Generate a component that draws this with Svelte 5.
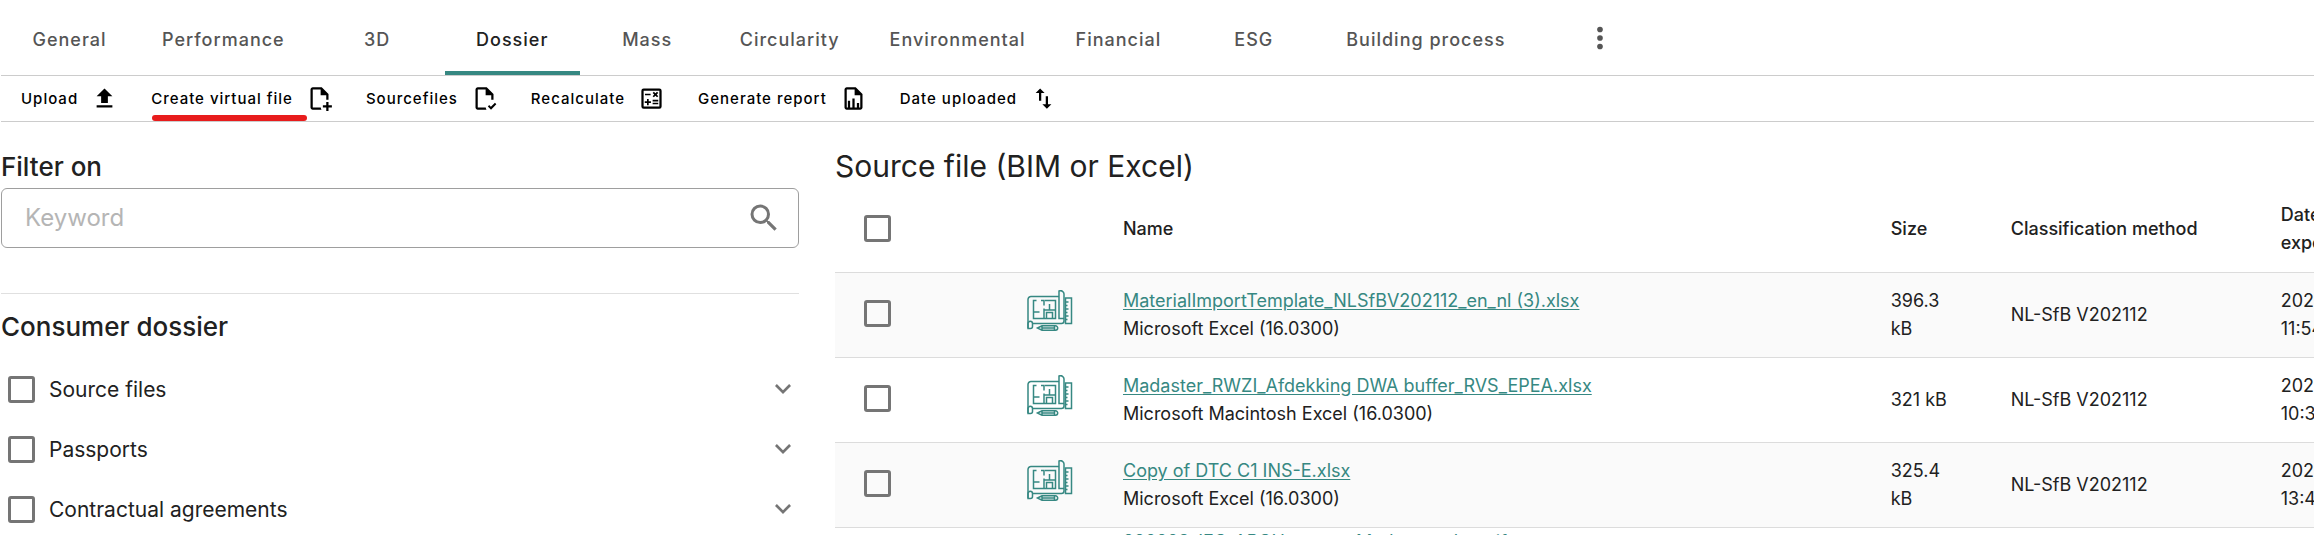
<script lang="ts">
	const tabs = [
		'General',
		'Performance',
		'3D',
		'Dossier',
		'Mass',
		'Circularity',
		'Environmental',
		'Financial',
		'ESG',
		'Building process'
	];

	const actions = [
		{ label: 'Upload', icon: 'upload' },
		{ label: 'Create virtual file', icon: 'file-plus', marked: true },
		{ label: 'Sourcefiles', icon: 'file-check' },
		{ label: 'Recalculate', icon: 'calculator' },
		{ label: 'Generate report', icon: 'file-chart' },
		{ label: 'Date uploaded', icon: 'sort' }
	];

	const icons: Record<string, string> = {
		upload: 'M9 16v-6H5l7-7 7 7h-4v6H9zm-4 4v-2h14v2H5z',
		'file-plus':
			'M6 2c-1.1 0-2 .9-2 2v16c0 1.1.9 2 2 2h7.8a6 6 0 0 1-.7-2H6V4h7v5h5v4.1c.3-.1.7-.1 1-.1s.7 0 1 .1V8l-6-6H6zm12 13v3h-3v2h3v3h2v-3h3v-2h-3v-3h-2z',
		'file-check':
			'M6 2c-1.1 0-2 .9-2 2v16c0 1.1.9 2 2 2h7.8a6 6 0 0 1-.7-2H6V4h7v5h5v4.1c.3-.1.7-.1 1-.1s.7 0 1 .1V8l-6-6H6zm15.3 13.8-3.6 3.6-1.6-1.6L15 19l2.8 3 4.7-4.8-1.2-1.4z',
		calculator:
			'M19 3H5a2 2 0 0 0-2 2v14a2 2 0 0 0 2 2h14a2 2 0 0 0 2-2V5a2 2 0 0 0-2-2zm0 16H5V5h14v14zM6.2 7.7h5v1.5h-5zM13 15.7h5v1.5h-5zM13 13.2h5v1.5h-5zM8 18h1.5v-2h2v-1.5h-2v-2H8v2H6V16h2zM14.1 10.9l1.4-1.4 1.4 1.4 1.1-1-1.4-1.4L18 7.1 16.9 6l-1.4 1.4L14.1 6 13 7.1l1.4 1.4L13 9.9z',
		'file-chart':
			'M6 2c-1.1 0-2 .9-2 2v16c0 1.1.9 2 2 2h12c1.1 0 2-.9 2-2V8l-6-6H6zm0 2h7v5h5v11H6V4zm1 10v6h2v-6H7zm4-2v8h2v-8h-2zm4 4v4h2v-4h-2z',
		sort: 'M9 3 5 7h3v7h2V7h3L9 3zm7 14v-7h-2v7h-3l4 4 4-4h-3z'
	};

	const filters = ['Source files', 'Passports', 'Contractual agreements'];

	const files = [
		{
			name: 'MaterialImportTemplate_NLSfBV202112_en_nl (3).xlsx',
			source: 'Microsoft Excel (16.0300)',
			size: '396.3 kB',
			method: 'NL-SfB V202112',
			exported: '2023-11-09 11:54'
		},
		{
			name: 'Madaster_RWZI_Afdekking DWA buffer_RVS_EPEA.xlsx',
			source: 'Microsoft Macintosh Excel (16.0300)',
			size: '321 kB',
			method: 'NL-SfB V202112',
			exported: '2023-10-12 10:38'
		},
		{
			name: 'Copy of DTC C1 INS-E.xlsx',
			source: 'Microsoft Excel (16.0300)',
			size: '325.4 kB',
			method: 'NL-SfB V202112',
			exported: '2023-09-26 13:41'
		},
		{
			name: '220228_IFC_ARCH_extern_Madaster_sloop.ifc',
			source:
				'Autodesk Revit 2022 (NLD) - The EXPRESS Data Manager Version 5.02.0100.07 : 28 Aug 2013 - 22.0.2.392',
			size: '18.2 MB',
			method: 'NL-SfB V202112',
			exported: '2023-09-14 09:20'
		}
	];

	let activeTab = $state('Dossier');
	let keyword = $state('');
	let selected = $state(files.map(() => false));
	let allSelected = $derived(selected.every(Boolean));

	function toggleAll(event: Event) {
		const checked = (event.currentTarget as HTMLInputElement).checked;
		selected = files.map(() => checked);
	}
</script>

<div class="page">
	<nav class="tabs" aria-label="Building">
		{#each tabs as tab}
			<button
				type="button"
				class="tab"
				class:active={tab === activeTab}
				aria-current={tab === activeTab ? 'page' : undefined}
				onclick={() => (activeTab = tab)}
			>
				{tab}
			</button>
		{/each}
		<button type="button" class="more" aria-label="More">
			<svg viewBox="0 0 24 24" aria-hidden="true">
				<circle cx="12" cy="6" r="2" />
				<circle cx="12" cy="12" r="2" />
				<circle cx="12" cy="18" r="2" />
			</svg>
		</button>
	</nav>

	<div class="toolbar">
		{#each actions as action}
			<button type="button" class="action" class:marked={action.marked}>
				{action.label}
				<svg viewBox="0 0 24 24" aria-hidden="true"><path d={icons[action.icon]} /></svg>
			</button>
		{/each}
	</div>

	<div class="content">
		<aside>
			<h2><label for="keyword">Filter on</label></h2>
			<div class="search">
				<input id="keyword" type="text" placeholder="Keyword" bind:value={keyword} />
				<svg viewBox="0 0 24 24" aria-hidden="true">
					<path
						d="M15.5 14h-.79l-.28-.27A6.47 6.47 0 0 0 16 9.5 6.5 6.5 0 1 0 9.5 16c1.61 0 3.09-.59 4.23-1.57l.27.28v.79l5 4.99L20.49 19l-4.99-5zm-6 0a4.5 4.5 0 1 1 0-9 4.5 4.5 0 0 1 0 9z"
					/>
				</svg>
			</div>

			<h2 class="group-title">Consumer dossier</h2>
			<ul class="filters">
				{#each filters as filter}
					<li>
						<label><input type="checkbox" />{filter}</label>
						<button type="button" aria-label={`Expand ${filter}`}>
							<svg viewBox="0 0 24 24" aria-hidden="true">
								<path d="M7.4 8.3 12 12.9l4.6-4.6L18 9.7l-6 6-6-6z" />
							</svg>
						</button>
					</li>
				{/each}
			</ul>
		</aside>

		<main>
			<h1>Source file (BIM or Excel)</h1>
			<table>
				<colgroup>
					<col class="col-check" />
					<col class="col-icon" />
					<col />
					<col class="col-size" />
					<col class="col-method" />
					<col class="col-date" />
				</colgroup>
				<thead>
					<tr>
						<th class="check">
							<input
								type="checkbox"
								aria-label="Select all"
								checked={allSelected}
								onchange={toggleAll}
							/>
						</th>
						<th></th>
						<th>Name</th>
						<th>Size</th>
						<th>Classification method</th>
						<th class="date">Date exported</th>
					</tr>
				</thead>
				<tbody>
					{#each files as file, index}
						<tr>
							<td class="check">
								<input
									type="checkbox"
									aria-label={`Select ${file.name}`}
									bind:checked={selected[index]}
								/>
							</td>
							<td>
								<svg class="plan" viewBox="0 0 46 42" aria-hidden="true">
									<path d="M32 6.5H4a3 3 0 0 0-3 3V38" />
									<path d="M5.5 33.5h29A2.5 2.5 0 0 0 37 31V4.5A3.5 3.5 0 0 0 32 1v27.5h5" />
									<path d="M1 38.5h2.5a2 2 0 0 0 2-2v-3a2 2 0 0 0-4.5 0z" />
									<path
										d="M9.5 10.5h-3v18h22v-18H18M14 10.5h3v5M6.5 22h6M17 18.5v10M22.5 14v6M17 20h11M19.5 28.5v-6h6v6"
									/>
									<path
										d="M38.5 8h6v25.5h-6zM38.5 12h3M38.5 15.5h2M38.5 19h3M38.5 22.5h2M38.5 26h3M38.5 29.5h2"
									/>
									<path
										d="m10.5 38 4.5-2.2h13.5a2.2 2.2 0 0 1 0 4.4H15zM15 38h12M15 35.8v4.4M27.5 35.8v4.4"
									/>
								</svg>
							</td>
							<td>
								<a href="#file">{file.name}</a>
								<div>{file.source}</div>
							</td>
							<td class="size">{file.size}</td>
							<td>{file.method}</td>
							<td class="date">{file.exported}</td>
						</tr>
					{/each}
				</tbody>
			</table>
		</main>
	</div>
</div>

<style>
	:global(body) {
		background: #fff;
		color: #212121;
		font-family: Inter, 'Liberation Sans', sans-serif;
	}

	.page {
		height: 100vh;
		overflow: hidden;
		padding-left: 1px;
	}

	button {
		align-items: center;
		background: none;
		border: 0;
		color: inherit;
		cursor: pointer;
		display: inline-flex;
		font-family: inherit;
		padding: 0;
	}

	svg {
		fill: currentColor;
		flex: none;
	}

	.tabs {
		border-bottom: 1px solid #ccc;
		display: flex;
		height: 75px;
		padding-left: 1px;
	}

	.tab {
		border-bottom: 4px solid transparent;
		color: #555;
		font-size: 18px;
		font-weight: 500;
		justify-content: center;
		letter-spacing: 1px;
		min-width: 135px;
		padding: 8px 25px 0;
		white-space: nowrap;
	}

	.tab.active {
		border-color: #368882;
		color: #212121;
	}

	.more {
		color: #555;
		margin-left: 53px;
	}

	.more svg {
		height: 34px;
		width: 34px;
	}

	.toolbar {
		border-bottom: 1px solid #ccc;
		display: flex;
		height: 45px;
	}

	.action {
		color: #000;
		font-size: 15px;
		font-weight: 500;
		gap: 13px;
		letter-spacing: 1px;
		padding: 0 13px 0 20px;
		position: relative;
		white-space: nowrap;
	}

	.action svg {
		height: 27px;
		width: 27px;
	}

	.action.marked::after {
		background: #e81c1c;
		border-radius: 3px;
		bottom: 0;
		content: '';
		height: 6px;
		left: 21px;
		position: absolute;
		right: 39px;
	}

	.content {
		display: grid;
		gap: 36px;
		grid-template-columns: 34.5% minmax(0, 1fr);
		padding-top: 24px;
	}

	h1,
	h2 {
		margin: 0;
	}

	h2 {
		font-size: 26px;
		font-weight: 500;
		line-height: 42px;
	}

	.search {
		align-items: center;
		border: 1px solid #9e9e9e;
		border-radius: 6px;
		color: #757575;
		display: flex;
		height: 58px;
		padding: 0 16px 0 23px;
	}

	.search input {
		border: 0;
		color: #212121;
		flex: 1;
		font-family: inherit;
		font-size: 24px;
		min-width: 0;
		outline: none;
		padding: 0 0 2px;
	}

	.search input::placeholder {
		color: #b5b5b5;
	}

	.search svg {
		height: 36px;
		width: 36px;
	}

	.group-title {
		border-top: 1px solid #e0e0e0;
		margin-top: 45px;
		padding-top: 12px;
	}

	.filters {
		list-style: none;
		margin: 11px 0 0;
		padding: 0;
	}

	.filters li {
		align-items: center;
		display: flex;
		height: 60px;
		justify-content: space-between;
	}

	.filters label {
		align-items: center;
		display: flex;
		font-size: 21px;
		gap: 14px;
		padding-left: 7px;
	}

	.filters button {
		color: #757575;
	}

	.filters button svg {
		height: 32px;
		width: 32px;
	}

	input[type='checkbox'] {
		appearance: none;
		border: 3px solid #757575;
		border-radius: 3px;
		display: block;
		height: 27px;
		margin: 0;
		width: 27px;
	}

	input[type='checkbox']:checked {
		background: #368882;
		border-color: #368882;
	}

	h1 {
		font-size: 30px;
		font-weight: 400;
		line-height: 41px;
	}

	table {
		border-collapse: collapse;
		font-size: 18px;
		line-height: 28px;
		table-layout: fixed;
		width: 106%;
	}

	.col-check {
		width: 192px;
	}

	.col-icon {
		width: 96px;
	}

	.col-size {
		width: 120px;
	}

	.col-method {
		width: 270px;
	}

	.col-date {
		width: 122px;
	}

	tr {
		border-bottom: 1px solid #dcdcdc;
	}

	th,
	td {
		box-sizing: border-box;
		height: 85px;
		padding: 0;
		text-align: left;
	}

	th {
		font-weight: 500;
	}

	.check {
		padding: 0 0 2px 29px;
	}

	.size {
		padding-right: 54px;
	}

	.date {
		padding-right: 16px;
	}

	tbody tr:nth-child(odd) {
		background: #fafafa;
	}

	a {
		color: #368882;
		text-decoration: underline;
		text-underline-offset: 2px;
	}

	.plan {
		color: #368882;
		display: block;
		fill: none;
		height: 42px;
		margin-bottom: 8px;
		stroke: currentColor;
		stroke-width: 1.5;
		width: 46px;
	}
</style>
